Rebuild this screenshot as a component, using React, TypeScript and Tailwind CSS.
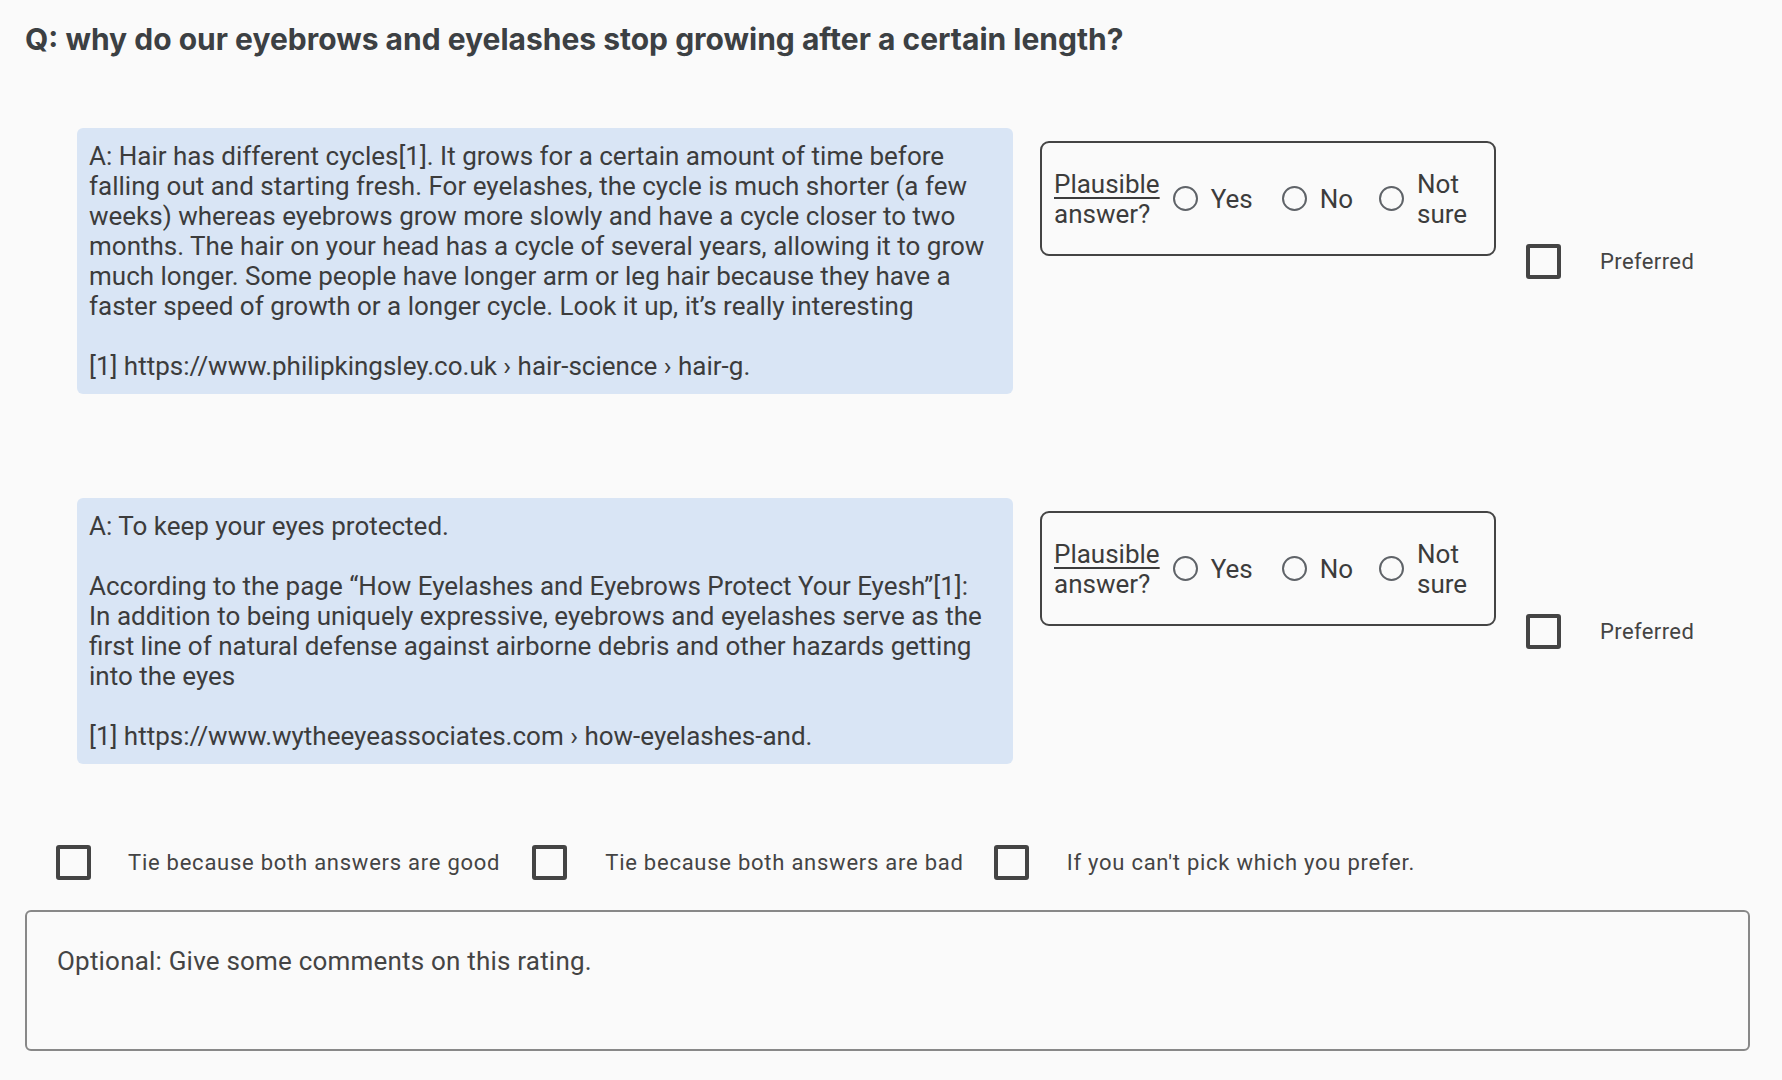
import React from "react";

const answers: React.ReactNode[][] = [
  [
    "A: Hair has different cycles[1]. It grows for a certain amount of time before falling out and starting fresh. For eyelashes, the cycle is much shorter (a few weeks) whereas eyebrows grow more slowly and have a cycle closer to two months. The hair on your head has a cycle of several years, allowing it to grow much longer. Some people have longer arm or leg hair because they have a faster speed of growth or a longer cycle. Look it up, it\u2019s really interesting",
    "[1] https://www.philipkingsley.co.uk \u203a hair-science \u203a hair-g.",
  ],
  [
    "A: To keep your eyes protected.",
    <>
      According to the page {"\u201cHow Eyelashes and Eyebrows Protect Your Eyesh\u201d[1]:"}
      <br />
      In addition to being uniquely expressive, eyebrows and eyelashes serve as the first line of natural defense
      against airborne debris and other hazards getting into the eyes
    </>,
    "[1] https://www.wytheeyeassociates.com \u203a how-eyelashes-and.",
  ],
];

function Radio({ label }: { label: React.ReactNode }) {
  return (
    <label className="flex items-center gap-[13px]">
      <span className="block w-[25px] h-[25px] rounded-full border-2 border-[#5f6368] bg-transparent shrink-0" />
      <span className="leading-[30px]">{label}</span>
    </label>
  );
}

function Checkbox() {
  return <span className="block w-[35px] h-[35px] rounded-[3px] border-[4px] border-[#444444] shrink-0" />;
}

export default function App() {
  return (
    <div
      className="min-h-[1080px] bg-[#fafafa] text-[#3c4043] pl-[25px] pr-[32px] pt-[20px]"
      style={{ fontFamily: "Roboto, 'Liberation Sans', sans-serif" }}
    >
      <h1
        className="text-[30px] leading-[38px] font-bold text-[#3c4043]"
        style={{ fontFamily: "Inter, Roboto, sans-serif" }}
      >
        Q: why do our eyebrows and eyelashes stop growing after a certain length?
      </h1>

      <div className="mt-[70px] flex flex-col gap-[104px] pl-[52px]">
        {answers.map((paras, i) => (
          <div key={i} className="flex items-start">
            <div className="w-[936px] rounded-[6px] bg-[#d9e5f5] px-[12px] pt-[13px] pb-[13px] text-[26px] leading-[30px] text-[#3c3c3c] flex flex-col gap-[30px]">
              {paras.map((p, j) => (
                <p key={j}>{p}</p>
              ))}
            </div>
            <div className="ml-[27px] mt-[13px] w-[456px] h-[115px] rounded-[9px] border-2 border-[#444444] pl-[12px] flex items-center gap-[13px] text-[26px] text-[#3c3c3c]">
              <div className="leading-[30px]">
                <div className="underline underline-offset-[4px] decoration-[2px]">Plausible</div>
                <div>answer?</div>
              </div>
              <Radio label="Yes" />
              <span className="w-[3px]" />
              <Radio label="No" />
              <span className="w-[0px]" />
              <Radio
                label={
                  <span className="block leading-[30px]">
                    Not
                    <br />
                    sure
                  </span>
                }
              />
            </div>
            <div className="ml-[30px] mt-[116px] flex items-center">
              <Checkbox />
              <span className="ml-[39px] text-[22px] tracking-[0.4px] text-[#444444]">Preferred</span>
            </div>
          </div>
        ))}
      </div>

      <div className="mt-[81px] pl-[31px] flex items-center text-[22px] tracking-[0.75px] text-[#444444]">
        <Checkbox />
        <span className="ml-[37px]">Tie because both answers are good</span>
        <span className="ml-[32px]" />
        <Checkbox />
        <span className="ml-[38px]">Tie because both answers are bad</span>
        <span className="ml-[30px]" />
        <Checkbox />
        <span className="ml-[38px]">If you can't pick which you prefer.</span>
      </div>

      <textarea
        className="mt-[30px] block w-[1725px] h-[141px] rounded-[6px] border-2 border-[#888888] bg-transparent px-[30px] py-[34px] text-[26px] leading-[30px] tracking-[0.2px] text-[#444444] placeholder:text-[#444444] resize-none outline-none"
        placeholder="Optional: Give some comments on this rating."
        style={{ fontFamily: "Roboto, 'Liberation Sans', sans-serif" }}
      />
    </div>
  );
}
